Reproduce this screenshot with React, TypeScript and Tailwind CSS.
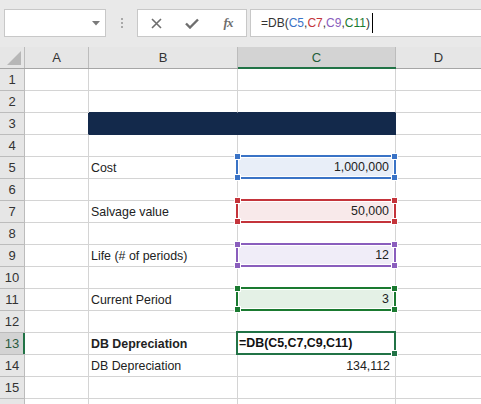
import { useState } from "react"

type Box = { border: string; fill: string; handle: string }

const BOXES: Record<string, Box> = {
  blue: { border: "border-[#3a73c6]", fill: "bg-[#e8eef8]", handle: "bg-[#3a73c6]" },
  red: { border: "border-[#c4343b]", fill: "bg-[#f8e9ea]", handle: "bg-[#c4343b]" },
  purple: { border: "border-[#8a5ebd]", fill: "bg-[#f0edf8]", handle: "bg-[#8a5ebd]" },
  green: { border: "border-[#1a7a30]", fill: "bg-[#e4f1e6]", handle: "bg-[#1a7a30]" },
}

const ROWS: { n: number; label?: string; value?: string; box?: string; bold?: boolean }[] = [
  { n: 1 },
  { n: 2 },
  { n: 3 },
  { n: 4 },
  { n: 5, label: "Cost", value: "1,000,000", box: "blue" },
  { n: 6 },
  { n: 7, label: "Salvage value", value: "50,000", box: "red" },
  { n: 8 },
  { n: 9, label: "Life (# of periods)", value: "12", box: "purple" },
  { n: 10 },
  { n: 11, label: "Current Period", value: "3", box: "green" },
  { n: 12 },
  { n: 13, label: "DB Depreciation", value: "=DB(C5,C7,C9,C11)", bold: true },
  { n: 14, label: "DB Depreciation", value: "134,112" },
  { n: 15 },
  { n: 16 },
]

function Handle({ pos, color }: { pos: string; color: string }) {
  return <div className={`absolute w-[7px] h-[7px] border border-white ${color} ${pos}`}></div>
}

function ValueCell({ row }: { row: (typeof ROWS)[number] }) {
  const box = row.box ? BOXES[row.box] : null
  const active = row.n === 13
  const navy = row.n === 3
  const beforeNavy = row.n === 2
  return (
    <div
      className={`relative h-[22px] border-r border-b ${navy ? "bg-[#13294b] border-[#13294b]" : beforeNavy ? "border-r-[#d4d4d4] border-b-[#13294b]" : "border-[#d4d4d4]"}`}
    >
      {box && (
        <div className={`absolute -top-[2px] -left-[2px] -right-[1px] -bottom-[1px] border-2 ${box.border} z-10`}>
          <div className={`w-full h-full border border-white ${box.fill} flex items-center justify-end pr-[4px] pt-px`}>
            <span className="text-[12.4px] text-[#222]">{row.value}</span>
          </div>
          <Handle pos="-top-[4px] -left-[4px]" color={box.handle} />
          <Handle pos="-top-[4px] -right-[4px]" color={box.handle} />
          <Handle pos="-bottom-[4px] -left-[4px]" color={box.handle} />
          <Handle pos="-bottom-[4px] -right-[4px]" color={box.handle} />
        </div>
      )}
      {active && (
        <div className="absolute -top-[2px] -left-[2px] -right-[1px] -bottom-[1px] border-2 border-[#217346] z-10 flex items-center pl-[1px] pt-px">
          <span className="text-[12.4px] font-bold text-[#111]">{row.value}</span>
          <div className="absolute -bottom-[4px] -right-[4px] w-[7px] h-[7px] bg-[#217346] border border-white"></div>
        </div>
      )}
      {!box && !active && row.value && (
        <div className="h-full flex items-center justify-end pr-[5px] pt-px text-[12.4px] text-[#222]">{row.value}</div>
      )}
    </div>
  )
}

export default function App() {
  const [formula] = useState("=DB(C5,C7,C9,C11)")
  const parts = [
    { t: "=DB(", c: "text-[#333]" },
    { t: "C5", c: "text-[#3a73c6]" },
    { t: ",", c: "text-[#333]" },
    { t: "C7", c: "text-[#c4343b]" },
    { t: ",", c: "text-[#333]" },
    { t: "C9", c: "text-[#8a5ebd]" },
    { t: ",", c: "text-[#333]" },
    { t: "C11", c: "text-[#1a7a30]" },
    { t: ")", c: "text-[#333]" },
  ]

  return (
    <main className="w-[481px] h-[404px] overflow-hidden bg-white font-['Liberation_Sans',Arial,sans-serif]" title={formula}>
      {/* formula bar */}
      <div className="h-[47px] bg-[#e9e9e9] flex items-start pt-[9px] pl-[4px]">
        <div className="w-[102px] h-[28px] bg-white border border-[#c8c8c8] flex items-center justify-end pr-[5px]">
          <svg width="8" height="5" viewBox="0 0 8 5"><path d="M0 0h8L4 4.5z" fill="#7a7a7a" /></svg>
        </div>
        <div className="w-[31px] h-[28px] flex flex-col items-center justify-center gap-[2px]">
          <div className="w-[2px] h-[2px] bg-[#a8a8a8]"></div>
          <div className="w-[2px] h-[2px] bg-[#a8a8a8]"></div>
          <div className="w-[2px] h-[2px] bg-[#a8a8a8]"></div>
        </div>
        <div className="w-[110px] h-[28px] bg-white border border-[#c8c8c8] flex items-center">
          <div className="w-[36px] flex justify-center">
            <svg width="11" height="11" viewBox="0 0 11 11"><path d="M1 1l9 9M10 1l-9 9" stroke="#6e6e6e" strokeWidth="1.6" /></svg>
          </div>
          <div className="w-[36px] flex justify-center">
            <svg width="14" height="11" viewBox="0 0 14 11"><path d="M1 5.5l4 4L13 1.5" stroke="#6e6e6e" strokeWidth="2.4" fill="none" /></svg>
          </div>
          <div className="w-[36px] flex justify-center">
            <span className="font-['Liberation_Serif',serif] italic font-bold text-[13px] text-[#6e6e6e] tracking-[-1px]">fx</span>
          </div>
        </div>
        <div className="ml-[3px] flex-1 h-[28px] bg-white border border-r-0 border-[#c8c8c8] flex items-center pl-[10px]">
          <span className="text-[12px]">
            {parts.map((p, i) => (
              <span key={i} className={p.c}>{p.t}</span>
            ))}
          </span>
          <div className="w-px h-[20px] bg-black ml-[2px]"></div>
        </div>
      </div>

      {/* column headers */}
      <div className="grid grid-cols-[25px_64px_149px_158px_1fr] h-[22px] bg-[#e6e6e6] border-b border-[#a6a6a6] text-[13px] text-[#333]">
        <div className="border-r border-[#bcbcbc] relative">
          <svg className="absolute left-[7px] bottom-[3px]" width="14" height="14" viewBox="0 0 14 14"><path d="M14 0V14H0z" fill="#b7b7b7" /></svg>
        </div>
        <div className="border-r border-[#bcbcbc] flex items-center justify-center">A</div>
        <div className="border-r border-[#bcbcbc] flex items-center justify-center">B</div>
        <div className="border-r border-[#bcbcbc] bg-[#d3d3d3] flex items-center justify-center text-[#1f5e3a] relative">
          C
          <div className="absolute left-0 right-[-1px] -bottom-px h-[2px] bg-[#217346]"></div>
        </div>
        <div className="flex items-center justify-center">D</div>
      </div>

      {/* rows */}
      {ROWS.map(row => (
        <div key={row.n} className="grid grid-cols-[25px_64px_149px_158px_1fr]">
          <div
            className={`h-[22px] border-b border-r flex items-center justify-center text-[13px] relative ${row.n === 13 ? "bg-[#d3d3d3] text-[#2c5a3e] border-[#bcbcbc]" : "bg-[#e6e6e6] text-[#333] border-[#bcbcbc]"}`}
          >
            {row.n < 16 ? row.n : ""}
            {row.n === 13 && <div className="absolute top-0 -right-px w-[2px] h-full bg-[#217346]"></div>}
          </div>
          <div className={`h-[22px] border-b border-r ${row.n === 3 ? "border-r-[#13294b] border-b-[#d4d4d4]" : "border-[#d4d4d4]"}`}></div>
          <div
            className={`h-[22px] border-b border-r flex items-center pl-[2px] pt-px text-[12.4px] text-[#222] ${row.n === 3 ? "bg-[#13294b] border-[#13294b]" : row.n === 2 ? "border-r-[#d4d4d4] border-b-[#13294b]" : "border-[#d4d4d4]"} ${row.bold ? "font-bold text-[#111]" : ""}`}
          >
            {row.label}
          </div>
          <ValueCell row={row} />
          <div className="h-[22px] border-b border-[#d4d4d4]"></div>
        </div>
      ))}
    </main>
  )
}
